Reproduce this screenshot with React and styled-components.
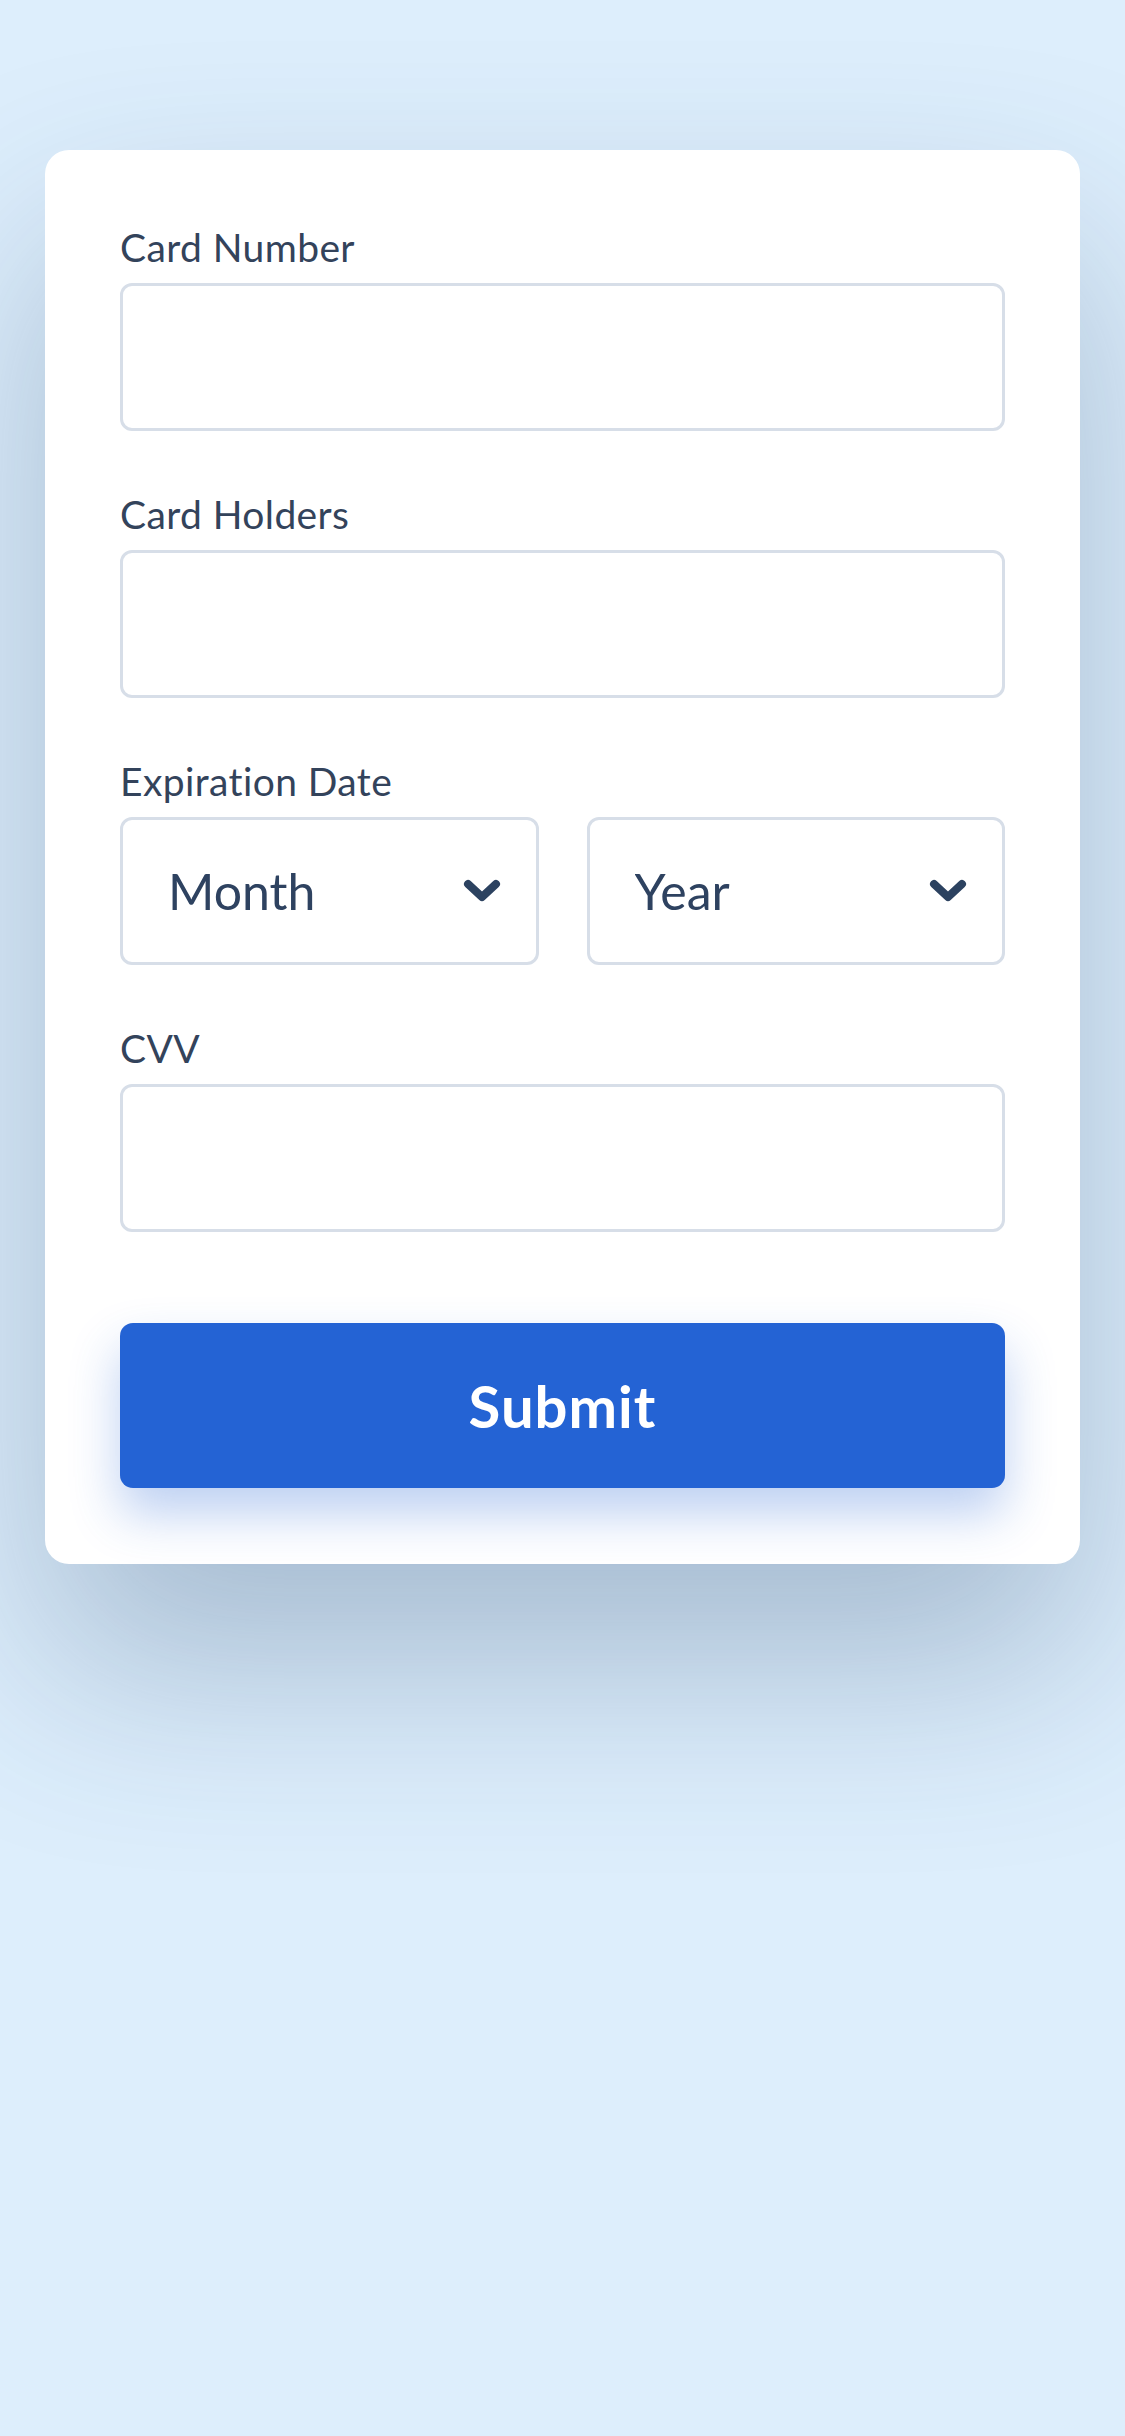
import React from 'react';
import styled, { createGlobalStyle } from 'styled-components';

const GlobalStyle = createGlobalStyle`
  html, body {
    margin: 0;
    padding: 0;
    background: #ddeefc;
  }
  body {
    min-height: 100vh;
    font-family: 'Lato', 'Noto Sans', sans-serif;
  }
`;

const Page = styled.main`
  min-height: 2436px;
  padding: 150px 45px 0;
  box-sizing: border-box;
`;

const Card = styled.form`
  background: #ffffff;
  border-radius: 24px;
  padding: 73px 75px 76px;
  box-shadow: 0 100px 200px rgba(40, 70, 110, 0.3);
  display: flex;
  flex-direction: column;
`;

const Field = styled.div`
  display: flex;
  flex-direction: column;
  margin-bottom: ${p => (p.$last ? '91px' : '59px')};
`;

const Label = styled.label`
  font-size: 39px;
  line-height: 48px;
  color: #33435b;
  margin-bottom: 12px;
  letter-spacing: 0.4px;
`;

const Input = styled.input`
  box-sizing: border-box;
  width: 100%;
  height: 148px;
  border: 3px solid #d7dee8;
  border-radius: 12px;
  background: #fff;
  font-family: inherit;
  font-size: 50px;
  color: #2e4260;
  padding: 0 46px;
  outline: none;
`;

const Row = styled.div`
  display: grid;
  grid-template-columns: 1fr 1fr;
  gap: 48px;
`;

const SelectWrap = styled.div`
  position: relative;
`;

const Select = styled.select`
  appearance: none;
  -webkit-appearance: none;
  box-sizing: border-box;
  width: 100%;
  height: 148px;
  border: 3px solid #d7dee8;
  border-radius: 12px;
  background: #fff;
  font-family: inherit;
  font-size: 50px;
  color: #2e4260;
  padding: 0 45px;
  outline: none;
`;

const Chevron = styled.svg`
  position: absolute;
  right: 38px;
  top: 50%;
  margin-top: -12px;
  pointer-events: none;
`;

const Button = styled.button`
  height: 165px;
  border: none;
  border-radius: 13px;
  background: #2463d4;
  color: #ffffff;
  font-family: inherit;
  font-size: 58px;
  font-weight: 700;
  letter-spacing: 1px;
  box-shadow: 0 26px 50px rgba(37, 99, 212, 0.3);
  cursor: pointer;
`;

const ChevronDown = () => (
  <Chevron width="38" height="24" viewBox="0 0 38 24">
    <polyline
      points="5,5 19,18 33,5"
      fill="none"
      stroke="#2c4260"
      strokeWidth="8"
      strokeLinecap="round"
      strokeLinejoin="round"
    />
  </Chevron>
);

const App = () => {
  return (
    <Page>
      <GlobalStyle />
      <Card onSubmit={e => e.preventDefault()}>
        <Field>
          <Label>Card Number</Label>
          <Input type="text" />
        </Field>
        <Field>
          <Label>Card Holders</Label>
          <Input type="text" />
        </Field>
        <Field>
          <Label>Expiration Date</Label>
          <Row>
            <SelectWrap>
              <Select defaultValue="">
                <option value="" disabled>Month</option>
              </Select>
              <ChevronDown />
            </SelectWrap>
            <SelectWrap>
              <Select defaultValue="">
                <option value="" disabled>Year</option>
              </Select>
              <ChevronDown />
            </SelectWrap>
          </Row>
        </Field>
        <Field $last>
          <Label>CVV</Label>
          <Input type="text" />
        </Field>
        <Button type="submit">Submit</Button>
      </Card>
    </Page>
  );
};

export default App;
